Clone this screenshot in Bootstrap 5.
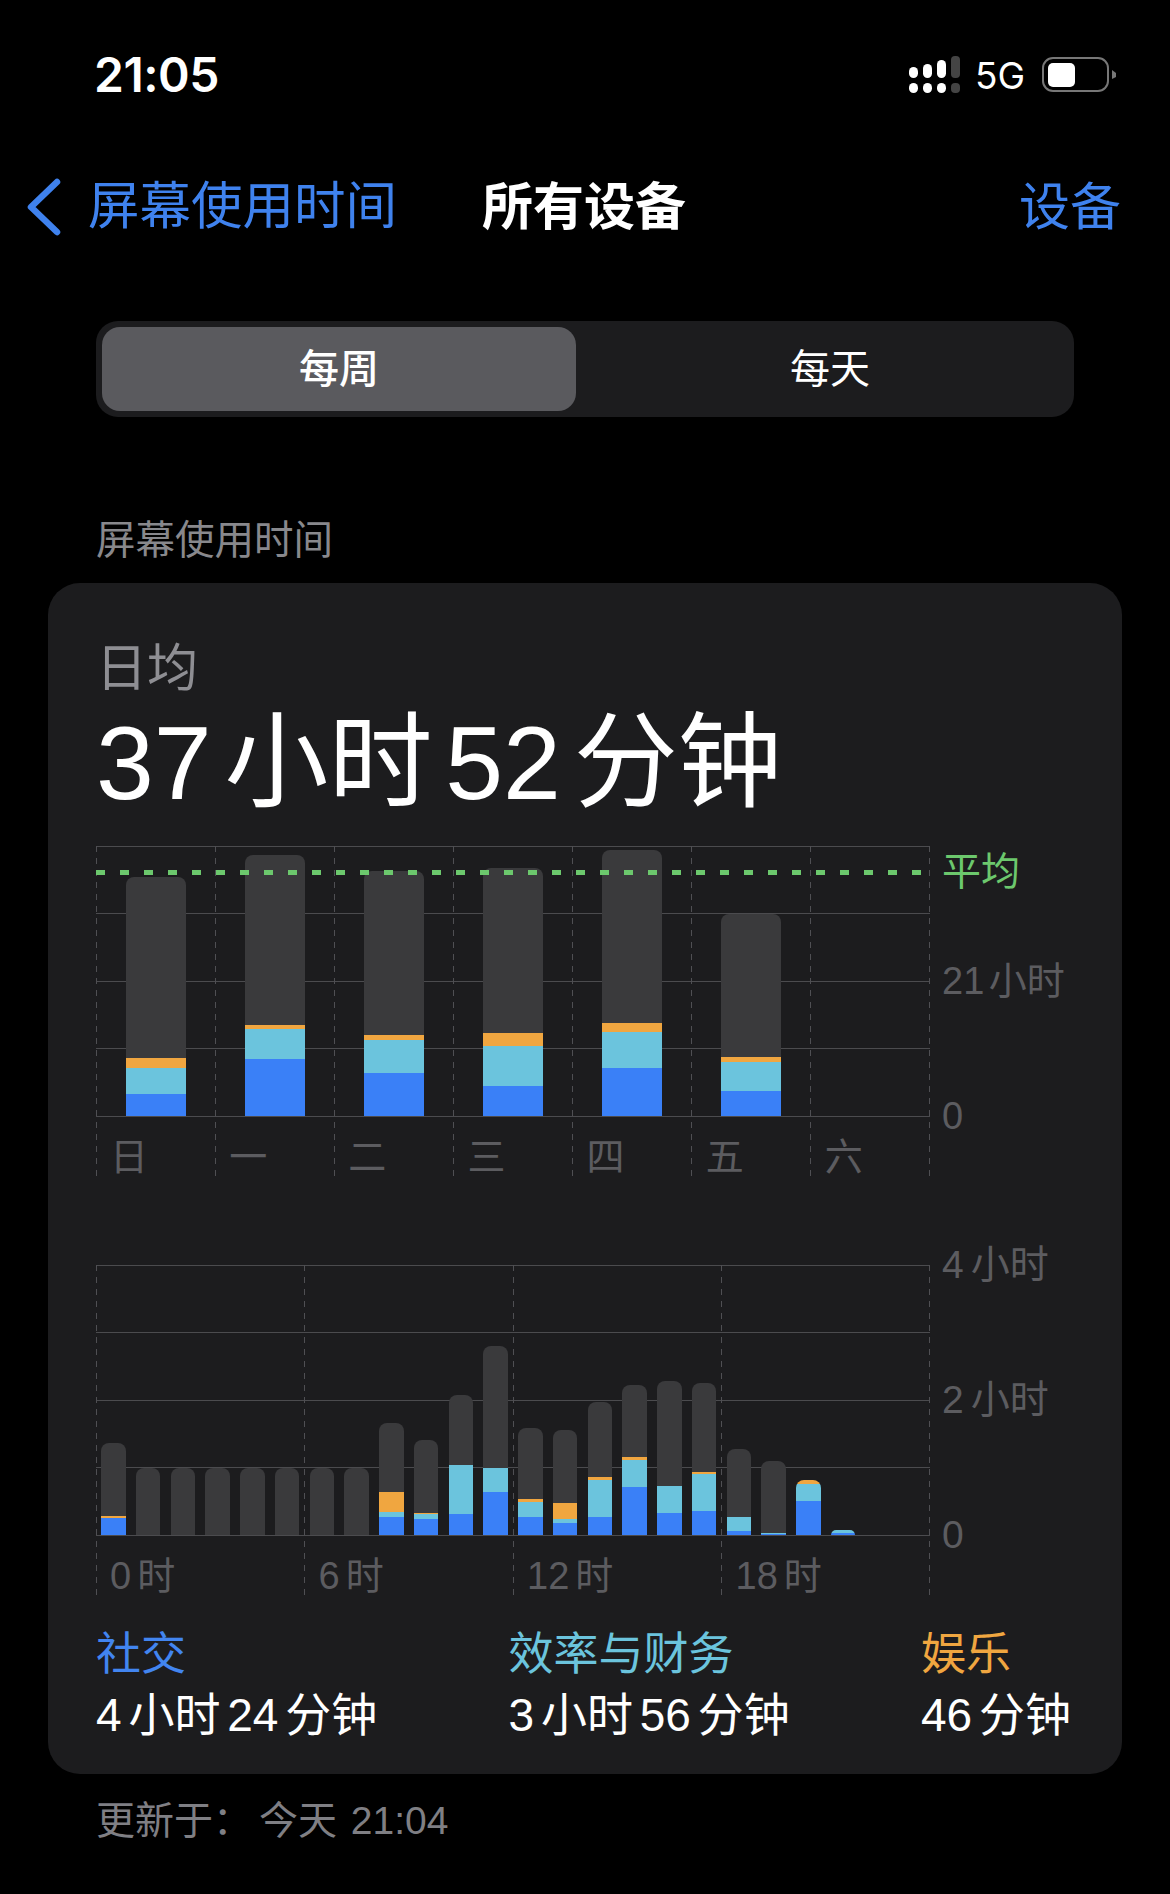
<!DOCTYPE html>
<html lang="zh-CN">
<head>
    <meta charset="UTF-8">
    <meta name="viewport" content="width=device-width, initial-scale=1.0">
    <title>屏幕使用时间</title>
    <link href="https://cdn.jsdelivr.net/npm/bootstrap@5.3.3/dist/css/bootstrap.min.css" rel="stylesheet">
    <style>
        body {
            background: #000;
            color: #fff;
            font-family: "Liberation Sans", "Noto Sans CJK SC", sans-serif;
        }
        .screen { width: 1170px; }

        /* status bar */
        .status-row { height: 150px; padding: 0 53px 0 94px; }
        .clock { font-family: Inter, sans-serif; font-size: 48px; font-weight: 600; line-height: 1; letter-spacing: -.5px; }
        .net-label { font-family: Inter, sans-serif; font-size: 37px; line-height: 1; margin: 0 17px 0 15px; }

        /* nav bar */
        .nav-row { height: 114px; padding: 0 49px 0 26px; display: grid; grid-template-columns: 456px auto 1fr; align-items: center; font-size: 51px; line-height: 1; }
        .nav-link-blue { color: #3f82ee; }
        .nav-title { font-weight: 700; }
        .nav-back { gap: 26px; font-size: 51.5px; }

        /* segmented control */
        .segment { height: 96px; margin: 57px 96px 0; padding: 6px; border-radius: 22px; background: #1c1c1e; font-size: 40px; line-height: 1; gap: 16px; }
        .segment-on { flex: 0 0 474px; background: #5a5a5e; border-radius: 18px; font-weight: 500; }
        .segment-off { flex: 1; }

        .section-label { margin: 99px 96px 19px; font-size: 39.5px; line-height: 48px; color: #88888c; }

        /* card */
        .usage-card { margin: 0 48px; padding: 56px 0 32px 48px; background: #1c1c1e; border-radius: 32px; }
        .avg-label { font-size: 51px; line-height: 60px; color: #8e8e93; }
        .avg-value { margin: 9px 0 28px; font-size: 104px; line-height: 110px; word-spacing: -.155em; white-space: nowrap; }

        /* charts */
        .plot { position: relative; width: 834px; height: 330px; }
        .h-lines { position: absolute; top: 0; left: 0; right: 0; height: 270.5px; }
        .h-lines i { display: block; height: 1px; background: #4b4b4e; }
        .v-lines { position: absolute; inset: 0; }
        .v-lines i {
            display: block;
            width: 1px;
            background: repeating-linear-gradient(to bottom, #4f4f53 0 6px, transparent 6px 12px);
        }
        .bars { position: relative; height: 270px; }
        .slot { flex: 1 1 0; min-width: 0; }
        .stack { overflow: hidden; border-radius: 8px 8px 0 0; }
        .week-chart .stack { width: 60px; }
        .day-chart .stack { width: 24.5px; }
        .seg-rest { background: #3a3a3c; }
        .seg-fun { background: #f0a640; }
        .seg-work { background: #6bc4dd; }
        .seg-social { background: #3a80f7; }
        .avg-line {
            position: absolute;
            top: 24px;
            left: 0;
            right: 0;
            height: 5px;
            background: repeating-linear-gradient(to right, #6cc86d 0 9px, transparent 9px 24px);
        }
        .axis-labels { position: relative; margin-top: 21px; font-size: 38px; line-height: 40px; color: #5c5c60; word-spacing: -.12em; }
        .axis-labels span { flex: 1 1 0; padding-left: 14px; }
        .ticks { margin-left: 12px; font-size: 38px; line-height: 40px; color: #5c5c60; white-space: nowrap; word-spacing: -.16em; }
        .week-ticks { padding-top: 6px; }
        .week-ticks .mid { margin-top: 69px; }
        .week-ticks .low { margin-top: 95px; }
        .avg-tick { color: #6cc86d; font-size: 39px; }
        .day-ticks { margin-top: -20px; gap: 95px; font-size: 39px; word-spacing: -.1em; }
        .day-chart { margin-top: 89px; }

        /* legend */
        .legend { margin-top: 33px; font-size: 46px; }
        .legend-item { flex: 0 0 412.5px; }
        .legend-item:last-child { flex: 1; }
        .legend-name { font-size: 45px; line-height: 54px; }
        .legend-time { margin-top: 6px; line-height: 54px; word-spacing: -.13em; white-space: nowrap; }
        .name-social { color: #4285f0; }
        .name-work { color: #6bc4dd; }
        .name-fun { color: #f0a640; }

        .updated { margin: 23px 96px 0; font-size: 39px; line-height: 48px; color: #7f7f84; }
        .updated-when { margin-left: 7px; word-spacing: 3px; }
    </style>
</head>
<body>
    <div class="screen">
        <!-- status bar -->
        <div class="status-row d-flex justify-content-between align-items-center">
            <div class="clock">21:05</div>
            <div class="d-flex align-items-center">
                <svg width="52" height="38" viewBox="0 0 52 38">
                    <rect x="1" y="11" width="9" height="11" rx="4.5" fill="#fff"/>
                    <rect x="15" y="8" width="9" height="14" rx="4.5" fill="#fff"/>
                    <rect x="29" y="4" width="9" height="18" rx="4.5" fill="#fff"/>
                    <rect x="43" y="0" width="9" height="22" rx="4" fill="#444"/>
                    <rect x="1" y="27" width="9" height="10" rx="4.5" fill="#fff"/>
                    <rect x="15" y="27" width="9" height="10" rx="4.5" fill="#fff"/>
                    <rect x="29" y="27" width="9" height="10" rx="4.5" fill="#fff"/>
                    <rect x="43" y="27" width="9" height="10" rx="4" fill="#444"/>
                </svg>
                <span class="net-label">5G</span>
                <svg width="75" height="36" viewBox="0 0 75 36">
                    <rect x="1" y="1" width="65" height="33" rx="10" fill="none" stroke="#777" stroke-width="2"/>
                    <rect x="6" y="6" width="27" height="24" rx="5" fill="#fff"/>
                    <path d="M70 13 L74 16 L74 20 L70 22 Z" fill="#777"/>
                </svg>
            </div>
        </div>

        <!-- nav bar -->
        <div class="nav-row">
            <div class="nav-back nav-link-blue d-flex align-items-center">
                <svg width="36" height="58" viewBox="0 0 36 58">
                    <path d="M31 4 L5 29 L31 54" fill="none" stroke="#3f82ee" stroke-width="6.5" stroke-linecap="round" stroke-linejoin="round"/>
                </svg>
                <span>屏幕使用时间</span>
            </div>
            <div class="nav-title">所有设备</div>
            <div class="nav-link-blue text-end">设备</div>
        </div>

        <!-- week / day switch -->
        <div class="segment d-flex">
            <div class="segment-on d-flex justify-content-center align-items-center">每周</div>
            <div class="segment-off d-flex justify-content-center align-items-center">每天</div>
        </div>

        <div class="section-label">屏幕使用时间</div>

        <div class="usage-card">
            <div class="avg-label">日均</div>
            <div class="avg-value">37 小时 52 分钟</div>

            <!-- per day of week -->
            <div class="week-chart d-flex">
                <div class="plot">
                    <div class="h-lines d-flex flex-column justify-content-between"><i></i><i></i><i></i><i></i><i></i></div>
                    <div class="v-lines d-flex justify-content-between"><i></i><i></i><i></i><i></i><i></i><i></i><i></i><i></i></div>
                    <div class="bars d-flex align-items-end" id="week-bars"></div>
                    <div class="avg-line"></div>
                    <div class="axis-labels d-flex">
                        <span>日</span><span>一</span><span>二</span><span>三</span><span>四</span><span>五</span><span>六</span>
                    </div>
                </div>
                <div class="ticks week-ticks">
                    <div class="avg-tick">平均</div>
                    <div class="mid">21 小时</div>
                    <div class="low">0</div>
                </div>
            </div>

            <!-- per hour -->
            <div class="day-chart d-flex">
                <div class="plot">
                    <div class="h-lines d-flex flex-column justify-content-between"><i></i><i></i><i></i><i></i><i></i></div>
                    <div class="v-lines d-flex justify-content-between"><i></i><i></i><i></i><i></i><i></i></div>
                    <div class="bars d-flex align-items-end" id="day-bars"></div>
                    <div class="axis-labels d-flex">
                        <span>0 时</span><span>6 时</span><span>12 时</span><span>18 时</span>
                    </div>
                </div>
                <div class="ticks day-ticks d-flex flex-column">
                    <div>4 小时</div>
                    <div>2 小时</div>
                    <div>0</div>
                </div>
            </div>

            <div class="legend d-flex">
                <div class="legend-item">
                    <div class="legend-name name-social">社交</div>
                    <div class="legend-time">4 小时 24 分钟</div>
                </div>
                <div class="legend-item">
                    <div class="legend-name name-work">效率与财务</div>
                    <div class="legend-time">3 小时 56 分钟</div>
                </div>
                <div class="legend-item">
                    <div class="legend-name name-fun">娱乐</div>
                    <div class="legend-time">46 分钟</div>
                </div>
            </div>
        </div>

        <div class="updated">更新于：<span class="updated-when">今天 21:04</span></div>
    </div>

    <script>
        // heights in px of each part of a bar: rest, entertainment, productivity, social
        const weekData = [
            [181, 10, 26, 22],
            [170, 4, 30, 57],
            [164, 5, 33, 43],
            [165, 13, 40, 30],
            [173, 9, 36, 48],
            [143, 5, 29, 25],
            [0, 0, 0, 0]
        ];
        const dayData = [
            [73, 2, 0, 17], [67, 0, 0, 0], [67, 0, 0, 0], [67, 0, 0, 0],
            [67, 0, 0, 0], [67, 0, 0, 0], [67, 0, 0, 0], [67, 0, 0, 0],
            [69, 20, 5, 18], [73, 1, 5, 16], [70, 0, 49, 21], [122, 0, 24, 43],
            [71, 3, 15, 18], [73, 16, 4, 12], [75, 3, 37, 18], [72, 3, 27, 48],
            [105, 0, 27, 22], [89, 2, 37, 24], [68, 0, 14, 4], [72, 0, 1, 1],
            [0, 4, 17, 34], [0, 0, 3, 2], [0, 0, 0, 0], [0, 0, 0, 0]
        ];
        const parts = ["seg-rest", "seg-fun", "seg-work", "seg-social"];

        function drawBars(id, data) {
            const holder = document.getElementById(id);
            data.forEach(function(row) {
                const slot = document.createElement("div");
                slot.className = "slot d-flex justify-content-center";
                const stack = document.createElement("div");
                stack.className = "stack";
                row.forEach(function(h, i) {
                    const seg = document.createElement("div");
                    seg.className = parts[i];
                    seg.style.height = h + "px";
                    stack.appendChild(seg);
                });
                slot.appendChild(stack);
                holder.appendChild(slot);
            });
        }

        drawBars("week-bars", weekData);
        drawBars("day-bars", dayData);
    </script>
    <script src="https://cdn.jsdelivr.net/npm/bootstrap@5.3.3/dist/js/bootstrap.bundle.min.js"></script>
</body>
</html>
